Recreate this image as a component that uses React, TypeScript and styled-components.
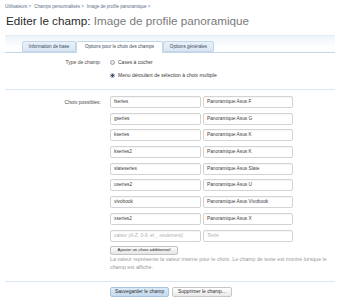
import React from "react";
import styled, { createGlobalStyle } from "styled-components";

const Global = createGlobalStyle`
  html, body { margin: 0; padding: 0; background: #ffffff; }
  body { font-family: "Liberation Sans", Arial, sans-serif; color: #333; }
  * { box-sizing: border-box; }
`;

const Page = styled.div`
  width: 341px;
  padding: 0 6px 0 5px;
`;

const Breadcrumb = styled.nav`
  margin-top: 4px;
  height: 6px;
  display: flex;
  gap: 3px;
  font-size: 4.5px;
  line-height: 6px;
  color: #5a6d87;
  white-space: nowrap;
`;

const Crumb = styled.span`
  color: #5a6d87;
`;

const Title = styled.h1`
  margin: 3px 0 0 1px;
  height: 16px;
  font-size: 11.7px;
  line-height: 16px;
  font-weight: normal;
  color: #7a7a7a;
  white-space: nowrap;
`;

const TitleLead = styled.span`
  color: #2a2a2a;
`;

const TabBar = styled.div`
  margin-top: 6px;
  border-top: 1px solid #e3edf6;
  border-bottom: 1px solid #c3d5e6;
  background: linear-gradient(#eef5fb, #ffffff 80%);
  padding: 5px 0 0 17px;
  display: flex;
  align-items: flex-end;
  height: 18px;
`;

const Tab = styled.div<{ $active?: boolean; $w: number }>`
  width: ${(p) => p.$w}px;
  height: ${(p) => (p.$active ? 12 : 11)}px;
  margin-bottom: ${(p) => (p.$active ? -1 : 0)}px;
  border: 1px solid #c3d5e6;
  border-bottom: ${(p) => (p.$active ? "none" : "1px solid #c3d5e6")};
  border-radius: 2px 2px 0 0;
  background: ${(p) => (p.$active ? "#ffffff" : "linear-gradient(#e8f1f9, #d9e7f4)")};
  font-size: 4.6px;
  line-height: 10px;
  text-align: center;
  color: #3d4a5a;
  white-space: nowrap;
`;

const Section = styled.div<{ $pt: number; $pb: number }>`
  display: grid;
  grid-template-columns: 96px 1fr;
  column-gap: 9px;
  padding: ${(p) => p.$pt}px 0 ${(p) => p.$pb}px 0;
  border-bottom: 1px solid #dbe7f2;
`;

const Label = styled.div<{ $lh: number }>`
  text-align: right;
  font-size: 5px;
  line-height: ${(p) => p.$lh}px;
  color: #4a4a4a;
  white-space: nowrap;
`;

const RadioList = styled.div`
  display: flex;
  flex-direction: column;
  gap: 5px;
`;

const RadioLine = styled.label`
  display: flex;
  align-items: center;
  gap: 3px;
  height: 8px;
  font-size: 5px;
  color: #3a3a3a;
  white-space: nowrap;
`;

const RadioDot = styled.span<{ $checked?: boolean }>`
  width: 5px;
  height: 5px;
  border-radius: 50%;
  border: 0.6px solid #9aa3ad;
  background: ${(p) =>
    p.$checked
      ? "radial-gradient(circle, #2e4a66 0 1.2px, #d6dde4 1.4px)"
      : "linear-gradient(#f4f4f4, #dcdcdc)"};
  flex: none;
`;

const Choices = styled.div`
  display: flex;
  flex-direction: column;
  align-items: flex-start;
`;

const ChoiceGrid = styled.div`
  display: grid;
  grid-template-columns: 91px 90px;
  grid-auto-rows: 12px;
  column-gap: 2px;
  row-gap: 4.7px;
`;

const Field = styled.div<{ $placeholder?: boolean }>`
  border: 1px solid #d3d3d3;
  border-radius: 2px;
  background: #ffffff;
  box-shadow: inset 0 1px 1px rgba(0, 0, 0, 0.04);
  padding-left: 3px;
  font-size: 4.8px;
  line-height: 10px;
  color: ${(p) => (p.$placeholder ? "#b0b0b0" : "#3e3e3e")};
  font-style: ${(p) => (p.$placeholder ? "italic" : "normal")};
  white-space: nowrap;
  overflow: hidden;
`;

const SmallButton = styled.button`
  display: block;
  margin-top: 4.5px;
  width: 68px;
  height: 8.5px;
  padding: 0;
  border: 1px solid #c2c2c2;
  border-radius: 2px;
  background: linear-gradient(#fbfbfb, #e6e6e6);
  font-family: inherit;
  font-size: 4.3px;
  line-height: 6px;
  color: #222;
  white-space: nowrap;
`;

const Explain = styled.p`
  margin: 0;
  width: 224px;
  font-size: 5.3px;
  line-height: 8px;
  color: #9a9a9a;
`;

const ButtonRow = styled.div`
  display: flex;
  gap: 3px;
  padding: 5px 0 0 105px;
`;

const MainButton = styled.button<{ $primary?: boolean; $w: number }>`
  display: block;
  width: ${(p) => p.$w}px;
  height: 10px;
  padding: 0;
  border: 1px solid ${(p) => (p.$primary ? "#a9c3dc" : "#c6c6c6")};
  border-radius: 2px;
  background: ${(p) =>
    p.$primary ? "linear-gradient(#dcebf8, #c3d9ee)" : "linear-gradient(#ffffff, #e9e9e9)"};
  font-family: inherit;
  font-size: 4.9px;
  line-height: 8px;
  color: #2b2b2b;
  white-space: nowrap;
`;

const rows: [string, string][] = [
  ["fseries", "Panoramique Asus F"],
  ["gseries", "Panoramique Asus G"],
  ["kseries", "Panoramique Asus K"],
  ["kseries2", "Panoramique Asus K"],
  ["slateseries", "Panoramique Asus Slate"],
  ["useries2", "Panoramique Asus U"],
  ["vivobook", "Panoramique Asus Vivobook"],
  ["xseries2", "Panoramique Asus X"],
];

export default function App() {
  return (
    <>
      <Global />
      <Page>
        <Breadcrumb>
          <Crumb>Utilisateurs &gt;</Crumb>
          <Crumb>Champs personnalisés &gt;</Crumb>
          <Crumb>Image de profile panoramique &gt;</Crumb>
        </Breadcrumb>
        <Title>
          <TitleLead>Editer le champ:</TitleLead> Image de profile panoramique
        </Title>
        <TabBar>
          <Tab $w={54}>Information de base</Tab>
          <Tab $w={87} $active>
            Options pour le choix des champs
          </Tab>
          <Tab $w={51}>Options générales</Tab>
        </TabBar>
        <Section $pt={5} $pb={10}>
          <Label $lh={8}>Type de champ:</Label>
          <RadioList>
            <RadioLine>
              <RadioDot />
              Cases à cocher
            </RadioLine>
            <RadioLine>
              <RadioDot $checked />
              Menu déroulant de sélection à choix multiple
            </RadioLine>
          </RadioList>
        </Section>
        <Section $pt={6} $pb={10}>
          <Label $lh={12}>Choix possibles:</Label>
          <Choices>
            <ChoiceGrid>
              {rows.map(([v, t]) => (
                <React.Fragment key={v}>
                  <Field>{v}</Field>
                  <Field>{t}</Field>
                </React.Fragment>
              ))}
              <Field $placeholder>valeur (A-Z, 0-9, et _ seulement)</Field>
              <Field $placeholder>Texte</Field>
            </ChoiceGrid>
            <SmallButton>Ajouter un choix additionnel</SmallButton>
            <Explain>
              La valeur représente la valeur interne pour le choix. Le champ de texte est montré lorsque le
              champ est affiché.
            </Explain>
          </Choices>
        </Section>
        <ButtonRow>
          <MainButton $primary $w={59}>
            Sauvegarder le champ
          </MainButton>
          <MainButton $w={60}>Supprimer le champ...</MainButton>
        </ButtonRow>
      </Page>
    </>
  );
}
